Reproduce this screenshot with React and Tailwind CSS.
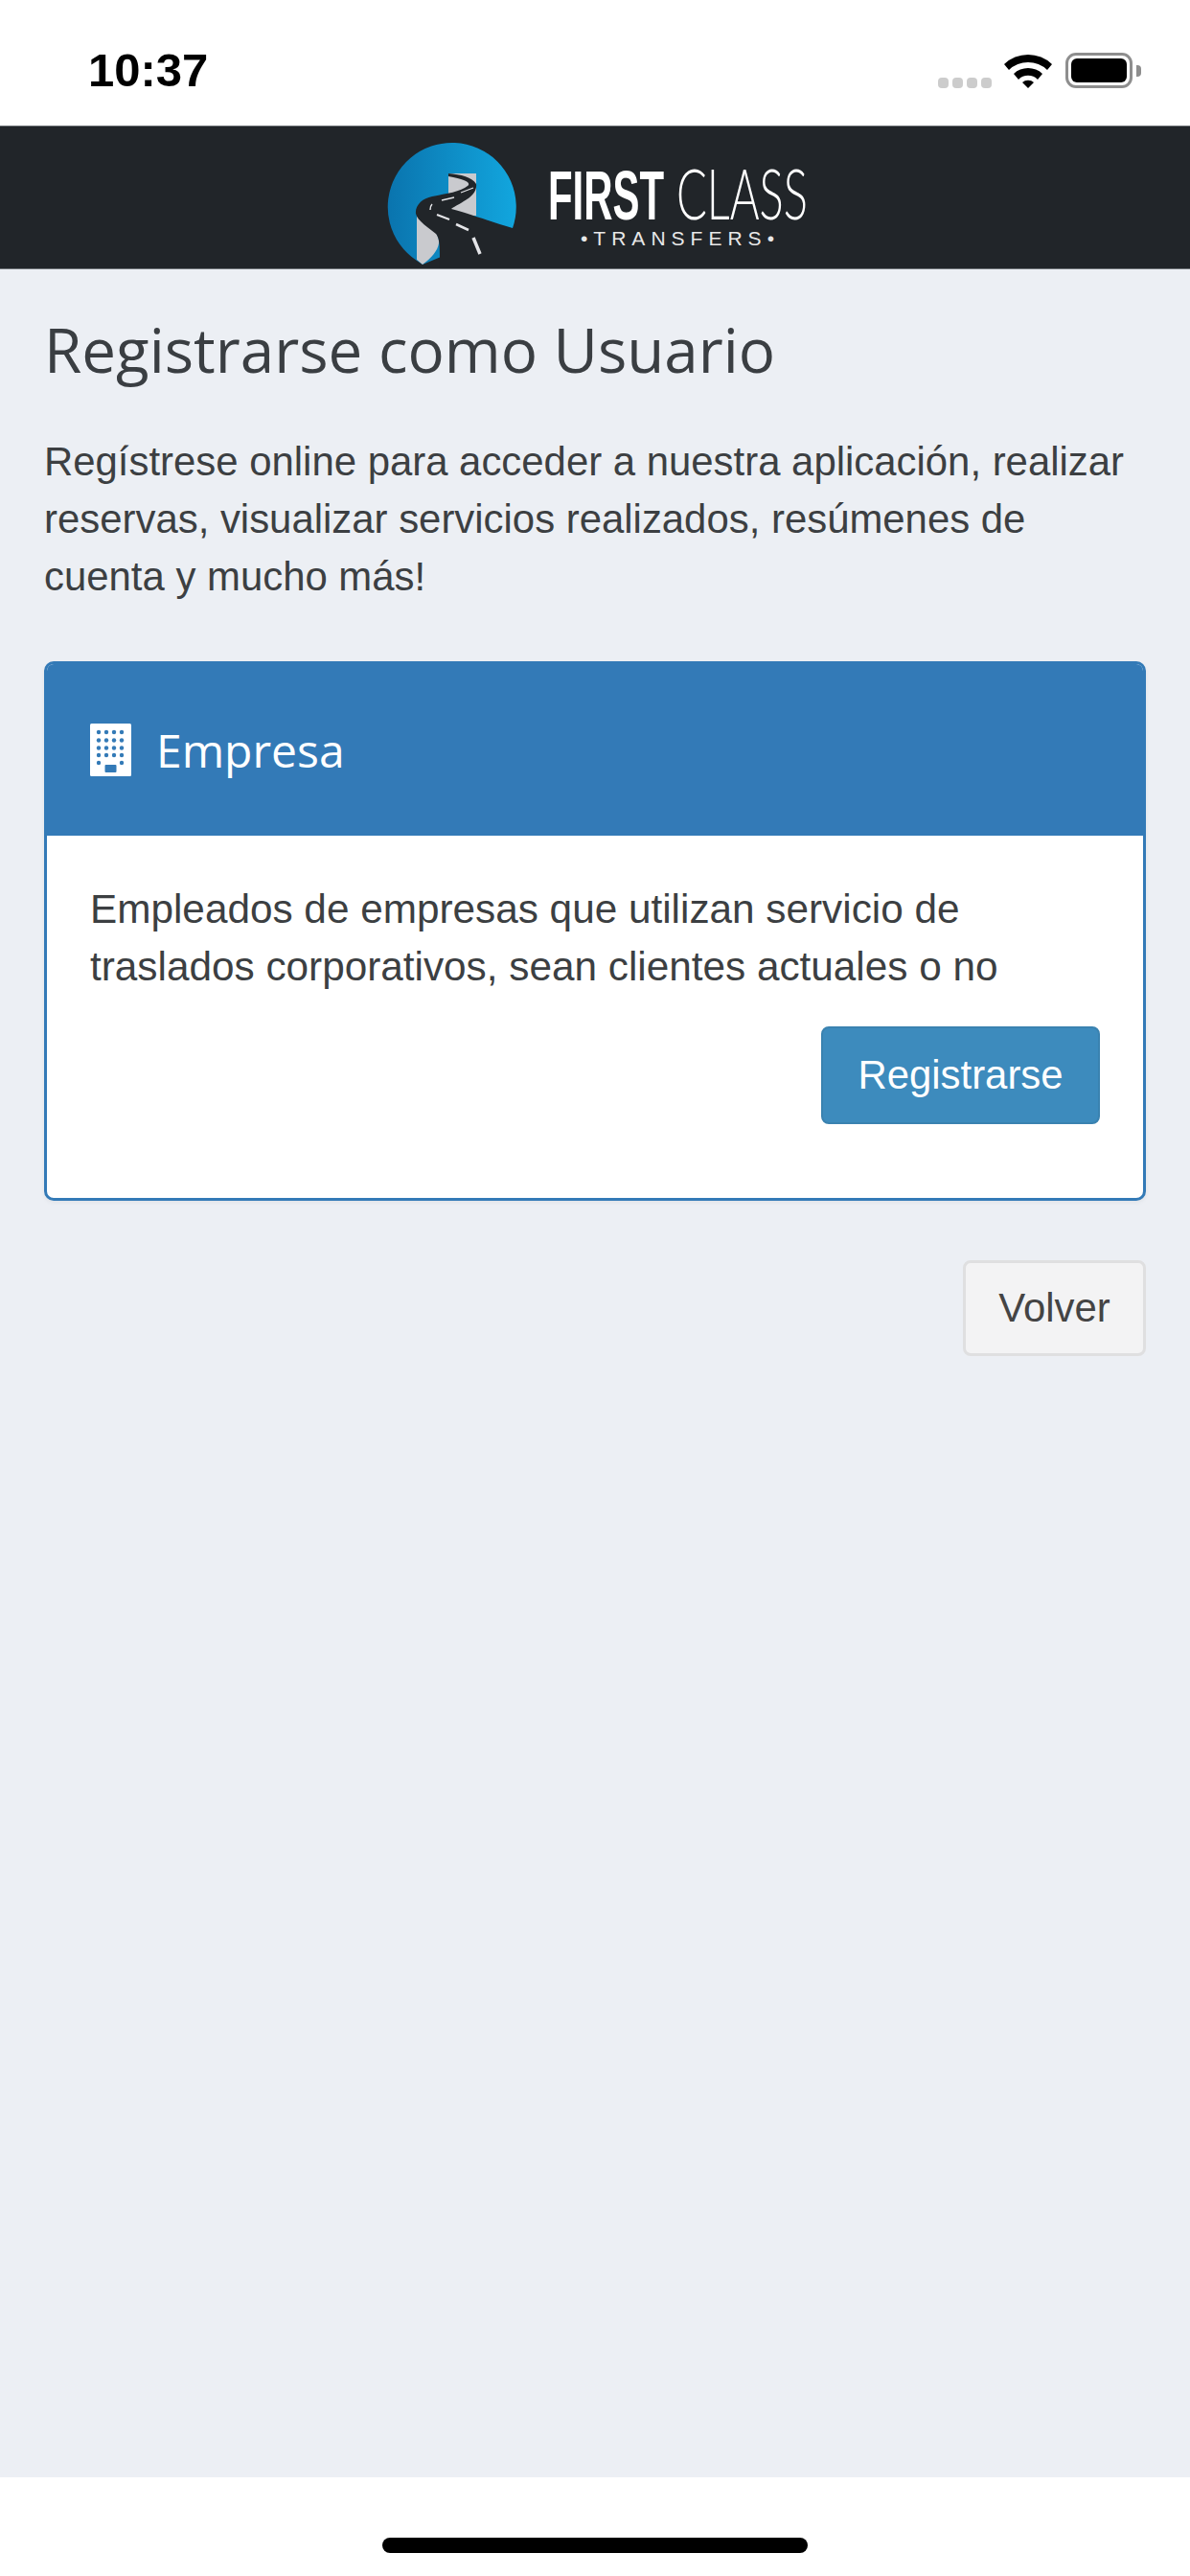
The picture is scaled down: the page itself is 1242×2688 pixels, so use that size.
import React from "react";

const sans = "font-['Liberation_Sans',Arial,sans-serif]";
const open = "font-['Open_Sans','Noto_Sans',sans-serif]";

function Wifi() {
  return (
    <svg width="50" height="37" viewBox="0 0 50 37">
      <path d="M0 12 A36 36 0 0 1 50 12 L45 18 A29 29 0 0 0 5 18 Z" fill="#000" />
      <path d="M10 22 A22 22 0 0 1 40 22 L35 28 A14 14 0 0 0 15 28 Z" fill="#000" />
      <path d="M19 31 A9 9 0 0 1 31 31 L25 37 Z" fill="#000" />
    </svg>
  );
}

function Battery() {
  return (
    <div className="flex items-center">
      <div className="w-[70px] h-[37px] rounded-[11px] border-[3px] border-[#8e8e8e] p-[3px]">
        <div className="w-full h-full rounded-[6px] bg-black" />
      </div>
      <div className="ml-[4px] w-[5px] h-[12px] rounded-r-[4px] bg-[#8e8e8e]" />
    </div>
  );
}

function StatusBar() {
  return (
    <div className="h-[131px] bg-white flex justify-between pl-[92px] pr-[51px] pt-[55px]">
      <span className={`${sans} text-[49px] leading-[37px] font-bold text-black`}>10:37</span>
      <div className="flex items-start">
        <div className="flex gap-[4px] mt-[26px] mr-[13px]">
          <div className="w-[11px] h-[11px] rounded-[4px] bg-[#cccccc]" />
          <div className="w-[11px] h-[11px] rounded-[4px] bg-[#cccccc]" />
          <div className="w-[11px] h-[11px] rounded-[4px] bg-[#cccccc]" />
          <div className="w-[11px] h-[11px] rounded-[4px] bg-[#cccccc]" />
        </div>
        <Wifi />
        <div className="ml-[14px]">
          <Battery />
        </div>
      </div>
    </div>
  );
}

function Logo() {
  return (
    <svg width="480" height="148" viewBox="0 1 480 148">
      <defs>
        <linearGradient id="blue" x1="0" x2="1" y1="0" y2="0">
          <stop offset="0" stopColor="#0a74ae" />
          <stop offset="1" stopColor="#12a6de" />
        </linearGradient>
      </defs>
      <path d="M154 107 A67 67 0 1 0 54 141 L60 145 L120 120 Z" fill="url(#blue)" />
      <rect x="87" y="50" width="29" height="44" fill="#c9cace" />
      <path
        d="M54 88 L54 140 L60 145 C70 138 78 128 77 120 C76 108 60 100 54 88 Z"
        fill="#c9cace"
      />
      <path
        d="M87 50 C100 51 112 54 116 61 C117 68 112 74 103 79 C97 83 92 85 90 87 C100 89 130 100 154 107 L154 148 L78 148 C78 125 78 118 74 113 C66 106 55 100 53 92 C52 83 60 76 70 74 C85 71 100 69 107 63 C111 60 105 56 87 53 Z"
        fill="#212529"
      />
      <g fill="none" stroke="#e4e5e8" strokeLinecap="butt">
        <path d="M113 65 L100 70" strokeWidth="1.2" />
        <path d="M93 75 L80 78" strokeWidth="1.5" />
        <path d="M70 82 C68 84 68 86 68 88" strokeWidth="1.5" />
        <path d="M75 93 L88 98" strokeWidth="2" />
        <path d="M95 103 L108 109" strokeWidth="2.5" />
        <path d="M113 117 L120 134" strokeWidth="3.5" />
      </g>
      <text
        x="191"
        y="98"
        textLength="121"
        lengthAdjust="spacingAndGlyphs"
        fontFamily="Liberation Sans"
        fontWeight="700"
        fontSize="72"
        fill="#fff"
      >
        FIRST
      </text>
      <text
        x="325"
        y="98"
        textLength="137"
        lengthAdjust="spacingAndGlyphs"
        fontFamily="Lato"
        fontWeight="300"
        fontSize="72"
        fill="#fff"
      >
        CLASS
      </text>
      <text
        x="225"
        y="125"
        textLength="202"
        fontFamily="Liberation Sans"
        fontSize="21"
        fill="#e8e8e8"
      >
        •TRANSFERS•
      </text>
    </svg>
  );
}

function BuildingIcon() {
  const xs = [9, 17, 25, 33];
  const ys = [9, 17.5, 25.5, 33];
  return (
    <svg width="43" height="55" viewBox="0 0 43 55">
      <rect width="43" height="55" rx="1.5" fill="#fff" />
      {ys.map((y) =>
        xs.map((x) => <circle key={`${x}-${y}`} cx={x} cy={y} r="2.2" fill="#337ab7" />)
      )}
      <circle cx="9" cy="41" r="2.2" fill="#337ab7" />
      <circle cx="33" cy="41" r="2.2" fill="#337ab7" />
      <rect x="15.5" y="43" width="12" height="8" rx="1" fill="#337ab7" />
    </svg>
  );
}

export default function App() {
  return (
    <div className={`${sans} w-[1242px] h-[2688px] flex flex-col bg-white`}>
      <StatusBar />
      <div className="h-[150px] bg-[#212529] border-y border-[#6b7074] flex items-center justify-center">
        <Logo />
      </div>
      <main className="flex-1 bg-[#eceff4] px-[46px] pt-[46px]">
        <h1 className={`${open} text-[63.7px] leading-[76px] text-[#3a3e42]`}>
          Registrarse como Usuario
        </h1>
        <p className="mt-[49px] text-[41.9px] leading-[60px] text-[#3c3f42]">
          Regístrese online para acceder a nuestra aplicación, realizar reservas, visualizar
          servicios realizados, resúmenes de cuenta y mucho más!
        </p>
        <section className="mt-[58px] h-[563px] rounded-[10px] border-[3px] border-[#337ab7] bg-white shadow-[0_2px_4px_rgba(0,0,0,0.05)] overflow-hidden">
          <div className="h-[179px] bg-[#337ab7] flex items-center pl-[45px] gap-[26px]">
            <BuildingIcon />
            <span className={`${open} text-[48px] text-white`}>Empresa</span>
          </div>
          <div className="px-[45px] pt-[47px]">
            <p className="text-[42.3px] leading-[60px] text-[#3c3f42]">
              Empleados de empresas que utilizan servicio de traslados corporativos, sean clientes
              actuales o no
            </p>
            <div className="flex justify-end mt-[32px]">
              <button className="w-[291px] h-[102px] rounded-[8px] border-[2px] border-[#3a82b0] bg-[#3d8bbd] text-[41.9px] text-white">
                Registrarse
              </button>
            </div>
          </div>
        </section>
        <div className="flex justify-end mt-[62px]">
          <button className="w-[191px] h-[100px] rounded-[8px] border-[3px] border-[#dfdfe0] bg-[#f3f3f4] text-[41.9px] text-[#444444]">
            Volver
          </button>
        </div>
      </main>
      <div className="h-[103px] bg-white flex justify-center pt-[63px]">
        <div className="w-[444px] h-[16px] rounded-full bg-black" />
      </div>
    </div>
  );
}
